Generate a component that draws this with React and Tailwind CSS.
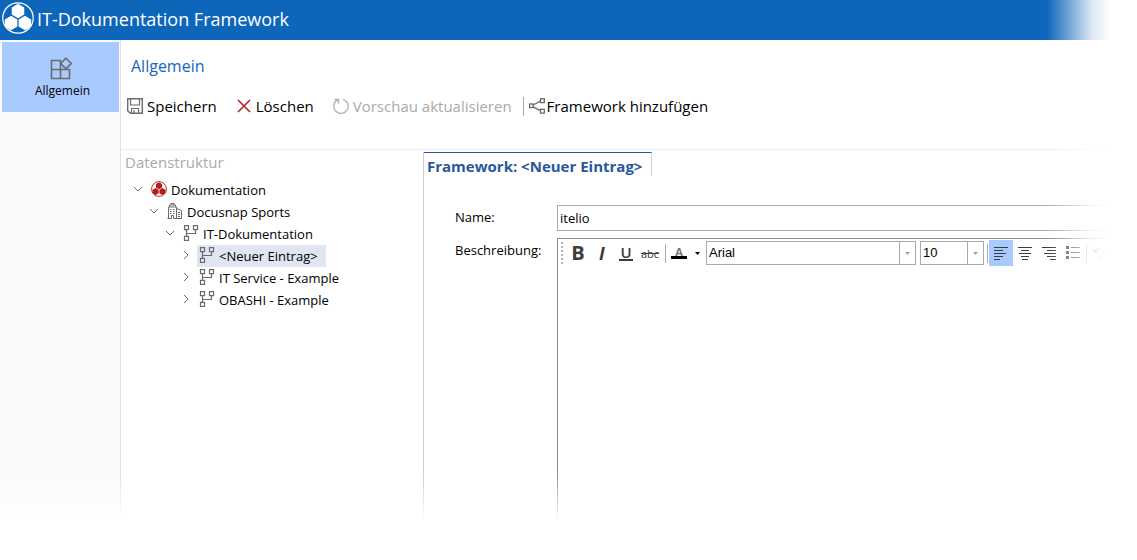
import { useState } from 'react';
import clsx from 'clsx';

const hexagon = (cx, cy, r) =>
    [[0, -1], [0.87, -0.5], [0.87, 0.5], [0, 1], [-0.87, 0.5], [-0.87, -0.5]]
        .map(([x, y]) => `${cx + x * r},${cy + y * r}`)
        .join(' ');

function Logo() {
    return (
        <svg className="w-8 h-8 shrink-0" viewBox="0 0 32 32" fill="#fff" aria-hidden="true">
            <circle cx="16" cy="16" r="15.2" fill="none" stroke="#fff" strokeWidth="1.2" />
            <polygon points={hexagon(16, 9, 7.2)} />
            <polygon points={hexagon(9.1, 21, 7.2)} />
            <polygon points={hexagon(22.9, 21, 7.2)} />
        </svg>
    );
}

function Icon({ children, className = 'text-[#6b6b6b]' }) {
    return (
        <svg
            className={clsx('w-4 h-4 shrink-0', className)}
            viewBox="0 0 16 16"
            fill="none"
            stroke="currentColor"
            strokeWidth="1"
            aria-hidden="true"
        >
            {children}
        </svg>
    );
}

const DocIcon = () => (
    <Icon className="text-[#b71c1c]">
        <circle cx="8" cy="8" r="7.4" strokeWidth="0.9" />
        <g fill="currentColor" stroke="none">
            <polygon points={hexagon(8, 4.8, 3.5)} />
            <polygon points={hexagon(4.6, 10.5, 3.5)} />
            <polygon points={hexagon(11.4, 10.5, 3.5)} />
        </g>
    </Icon>
);

const CompanyIcon = () => (
    <Icon>
        <path d="M1.5 15.5v-11.5h8v11.5M2.5 4v-2h6v2M4 2v-1.500h3v1.500M.5 15.5h4v-3h2v3h8v-8l-5-2" />
        <path d="M3 6.5h1.5M6 6.5h1.5M3 8.5h1.5M6 8.5h1.5M3 10.5h1.5M6 10.5h1.5M11 9.5h2M11 11.5h2M11 13.5h2" />
    </Icon>
);

const NodeIcon = () => (
    <Icon>
        <g strokeWidth="1.2">
            <rect x="1.5" y=".6" width="4" height="4" />
            <rect x="10.5" y=".6" width="4" height="4" />
            <rect x="1.5" y="11.4" width="4" height="4" />
            <path d="M3.5 4.5v7M3.5 8.5h9v-4" />
        </g>
    </Icon>
);

const SaveIcon = () => (
    <Icon>
        <path d="M.7.7h14.6v14.6h-12l-2.6-2.6z" strokeWidth="1.4" />
        <path d="M3.5 1v6h9v-6M4.5 15v-4.5h7v4.5M7 12v3" strokeWidth="1.2" />
    </Icon>
);

const DeleteIcon = () => (
    <Icon className="text-[#b9222b]">
        <path d="M2 2l12 12M14 2l-12 12" strokeWidth="1.6" />
    </Icon>
);

const RefreshIcon = () => (
    <Icon className="text-[#b4b4b4]">
        <path d="M10 1.300a7.200 7.200 0 1 1-5.500.600M1.500 1.500h4v4" strokeWidth="1.4" />
    </Icon>
);

const ShareIcon = () => (
    <Icon>
        <g strokeWidth="1.3">
            <rect x=".6" y="6" width="3.5" height="3.5" />
            <rect x="11.5" y=".8" width="3.8" height="3.8" />
            <rect x="11.5" y="11.3" width="3.8" height="3.8" />
            <path d="M4 7l7.5-3.8M4 8.8l7.5 3.8" />
        </g>
    </Icon>
);

const tree = [
    { level: 0, label: 'Dokumentation', icon: DocIcon, open: true },
    { level: 1, label: 'Docusnap Sports', icon: CompanyIcon, open: true },
    { level: 2, label: 'IT-Dokumentation', icon: NodeIcon, open: true },
    { level: 3, label: '<Neuer Eintrag>', icon: NodeIcon },
    { level: 3, label: 'IT Service - Example', icon: NodeIcon },
    { level: 3, label: 'OBASHI - Example', icon: NodeIcon },
];

const indent = ['pl-[11px]', 'pl-[27px]', 'pl-[43px]', 'pl-[59px]'];

function TreeRow({ item, selected, onSelect }) {
    const ItemIcon = item.icon;
    return (
        <li className={clsx('flex items-center h-[22px]', indent[item.level])}>
            <svg className="w-3 h-3 mr-[5px] mb-0.5 shrink-0 text-[#6b6b6b]" viewBox="0 0 12 12" fill="none" stroke="currentColor" aria-hidden="true">
                <path d={item.open ? 'M2 4l4 4l4-4' : 'M4 2l4 4l-4 4'} />
            </svg>
            <button
                type="button"
                onClick={onSelect}
                className={clsx('flex items-center gap-1 h-[22px] pl-0.5 pr-2 whitespace-nowrap', selected && 'bg-[#dfe6f1]')}
            >
                <span className="pb-0.5"><ItemIcon /></span>
                <span className="pt-0.5">{item.label}</span>
            </button>
        </li>
    );
}

function ToolbarButton({ icon, children, disabled, className }) {
    return (
        <button
            type="button"
            disabled={disabled}
            className={clsx('flex items-center whitespace-nowrap disabled:text-[#aaaaaa]', className)}
        >
            {icon}
            {children}
        </button>
    );
}

function FormatButton({ label, active, className, children }) {
    return (
        <button
            type="button"
            aria-label={label}
            className={clsx('w-6 h-[26px] shrink-0 flex items-center justify-center text-[#3c3c3c]', active && 'bg-[#a9caff]', className)}
        >
            {children}
        </button>
    );
}

function Combo({ label, value, options, className }) {
    return (
        <div className={clsx('relative h-6 shrink-0 border border-[#ababab]', className)}>
            <select
                aria-label={label}
                defaultValue={value}
                className="appearance-none w-full h-full pl-0.5 pb-0.5 bg-white font-['Liberation_Sans',sans-serif] text-[13px] leading-none outline-none"
            >
                {options.map((o) => <option key={o}>{o}</option>)}
            </select>
            <span className="absolute right-0 inset-y-0 w-4 border-l border-[#ababab] flex items-center justify-center pointer-events-none">
                <svg className="w-[5px] h-[3px]" viewBox="0 0 5 3" fill="#a0a0a0" aria-hidden="true"><path d="M0 0h5l-2.5 3z" /></svg>
            </span>
        </div>
    );
}

const Lines = ({ d }) => (
    <svg className="w-4 h-4" viewBox="0 0 16 16" fill="none" stroke="currentColor" aria-hidden="true">
        <path d={d} />
    </svg>
);

const Divider = ({ className }) => <span className={clsx('w-px h-[19px] shrink-0 bg-[#ababab]', className)} />;

function EditorToolbar() {
    return (
        <div className="flex items-center h-7 pl-[3px]" role="toolbar" aria-label="Formatierung">
            <svg className="w-[5px] h-[22px] shrink-0" viewBox="0 0 5 22" fill="#b0b0b0" aria-hidden="true">
                <path d="M0 0h2v2h-2zM0 4h2v2h-2zM0 8h2v2h-2zM0 12h2v2h-2zM0 16h2v2h-2zM0 20h2v2h-2z" />
            </svg>
            <FormatButton label="Fett"><span className="text-xl font-bold leading-none">B</span></FormatButton>
            <FormatButton label="Kursiv"><span className="text-lg font-bold italic leading-none">I</span></FormatButton>
            <FormatButton label="Unterstrichen">
                <span className="px-px border-b-2 border-[#3c3c3c] text-[15px] font-semibold leading-[13px]">U</span>
            </FormatButton>
            <FormatButton label="Durchgestrichen"><span className="text-[11px] line-through leading-none">abc</span></FormatButton>
            <Divider className="ml-[3px]" />
            <FormatButton label="Textfarbe" className="ml-px">
                <span className="flex flex-col items-center">
                    <span className="text-[11px] font-bold leading-[9px] text-[#777777]">A</span>
                    <span className="w-4 h-[3px] bg-black" />
                </span>
            </FormatButton>
            <button type="button" aria-label="Textfarbe wählen" className="w-3 h-[26px] shrink-0 flex items-center justify-center">
                <svg className="w-[5px] h-[3px]" viewBox="0 0 5 3" aria-hidden="true"><path d="M0 0h5l-2.5 3z" /></svg>
            </button>
            <Combo label="Schriftart" value="Arial" options={['Arial', 'Calibri', 'Verdana']} className="w-[210px] ml-[3px]" />
            <Combo label="Schriftgröße" value="10" options={['8', '9', '10', '11', '12']} className="w-16 ml-1" />
            <Divider className="ml-[3px] mr-px" />
            <FormatButton label="Linksbündig" active><Lines d="M1 2.5h14M1 5.5h9M1 8.5h12M1 11.5h9M1 14.5h6" /></FormatButton>
            <FormatButton label="Zentriert"><Lines d="M1 2.5h14M4 5.5h8M2 8.5h12M4 11.5h8M5 14.5h6" /></FormatButton>
            <FormatButton label="Rechtsbündig"><Lines d="M1 2.5h14M6 5.5h9M3 8.5h12M6 11.5h9M9 14.5h6" /></FormatButton>
            <FormatButton label="Aufzählung">
                <Lines d="M1 1.5h3M1 2.5h3M1 3.5h3M1 6.5h3M1 7.5h3M1 8.5h3M1 11.5h3M1 12.5h3M1 13.5h3M6 2.5h9M6 7.5h9M6 12.5h9" />
            </FormatButton>
            <Divider className="ml-px" />
            <FormatButton label="Rückgängig">
                <Lines d="M3 2v5h5M3 7c3-5 10-4 10 1c0 3-2 5-5 6" />
            </FormatButton>
        </div>
    );
}

export default function App() {
    const [selected, setSelected] = useState(3);

    return (
        <div className="relative flex flex-col min-h-screen overflow-hidden bg-white font-['Open_Sans','Noto_Sans',sans-serif] text-black">
            <header className="flex items-center h-10 pl-0.5 pb-1 bg-[#0e66ba] text-white">
                <Logo />
                <h1 className="pl-[3px] pt-0.5 text-lg">IT-Dokumentation Framework</h1>
            </header>

            <div className="flex flex-1">
                <nav className="w-[121px] shrink-0 bg-[#fafafa] border-r border-[#e1e1e1] pt-0.5 pl-0.5 pr-px">
                    <button type="button" className="flex flex-col items-center w-full h-[70px] pt-[15px] pl-1 bg-[#a9caff] text-xs">
                        <svg className="w-6 h-6 mr-1 mb-0.5" viewBox="0 0 24 24" fill="none" stroke="#6b6b6b" strokeWidth="1.6" aria-hidden="true">
                            <path d="M2.5 3.5h9v18h-9zM2.5 12.5h18v9h-18z" />
                            <path d="M17 1.2l5.3 5.3l-5.3 5.3l-5.3-5.3z" fill="#a9caff" />
                        </svg>
                        Allgemein
                    </button>
                </nav>

                <div className="flex flex-col flex-1 min-w-0">
                    <section className="h-[110px] border-b border-[#ededed]">
                        <h2 className="pl-2.5 pt-[13px] text-base leading-[26px] font-medium text-[#1665b8]">Allgemein</h2>
                        <div className="flex items-center h-6 mt-[15px] pl-1.5 text-[15px]">
                            <ToolbarButton icon={<SaveIcon />} className="gap-1">Speichern</ToolbarButton>
                            <ToolbarButton icon={<DeleteIcon />} className="gap-1 ml-[19px]">Löschen</ToolbarButton>
                            <ToolbarButton icon={<RefreshIcon />} className="gap-1 ml-[19px]" disabled>Vorschau aktualisieren</ToolbarButton>
                            <Divider className="ml-[11px] mr-[5px]" />
                            <ToolbarButton icon={<ShareIcon />} className="gap-0.5">Framework hinzufügen</ToolbarButton>
                        </div>
                    </section>

                    <div className="flex flex-1">
                        <aside className="w-[302px] shrink-0">
                            <h3 className="pl-1 text-[15px] leading-6 text-[#aaaaaa]">Datenstruktur</h3>
                            <ul className="pt-[5px] text-[13px]">
                                {tree.map((item, i) => (
                                    <TreeRow key={item.label} item={item} selected={selected === i} onSelect={() => setSelected(i)} />
                                ))}
                            </ul>
                        </aside>

                        <main className="flex flex-col flex-1 min-w-0 mt-0.5 border-l border-[#cfcfcf]">
                            <h3 className="self-start h-6 pl-[3px] pr-[9px] border-t border-r border-t-[#2a579a] border-r-[#cfcfcf] text-[15px] leading-[27px] font-bold whitespace-nowrap text-[#2a579a]">
                                Framework: &lt;Neuer Eintrag&gt;
                            </h3>
                            <form className="flex flex-col flex-1 gap-[7px] pt-[29px] pl-[31px] text-[13px]">
                                <div className="flex">
                                    <label htmlFor="name" className="w-[102px] shrink-0 pt-0.5 leading-5">Name:</label>
                                    <input id="name" defaultValue="itelio" className="flex-1 min-w-0 h-[26px] px-0.5 border border-[#ababab] outline-none" />
                                </div>
                                <div className="flex flex-1">
                                    <label htmlFor="description" className="w-[102px] shrink-0 pt-0.5 leading-5">Beschreibung:</label>
                                    <div className="flex flex-col flex-1 min-w-0 overflow-hidden border-t border-l border-[#8a8a94]">
                                        <EditorToolbar />
                                        <textarea id="description" className="flex-1 p-2 resize-none outline-none" />
                                    </div>
                                </div>
                            </form>
                        </main>
                    </div>
                </div>
            </div>

            {/* page edges fade out to white */}
            <div className="absolute inset-y-0 right-0 w-[90px] pointer-events-none bg-linear-to-r from-white/0 via-white/85 via-50% to-white to-70%" />
            <div className="absolute inset-x-0 bottom-0 h-[88px] pointer-events-none bg-linear-to-b from-white/0 to-white to-55%" />
        </div>
    );
}
